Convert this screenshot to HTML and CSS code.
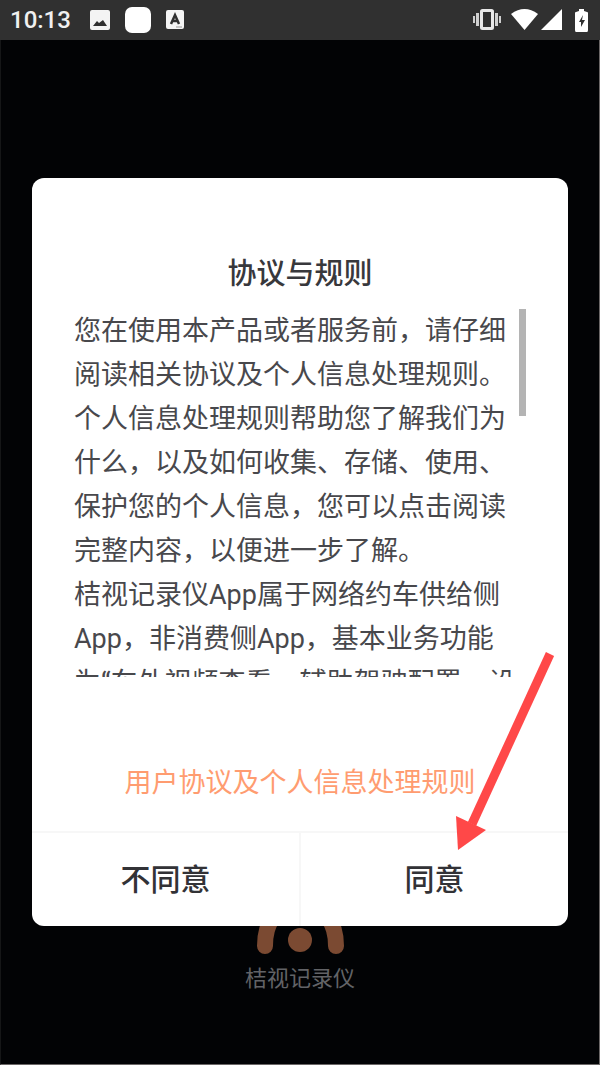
FILE: index.html
```
<!DOCTYPE html>
<html lang="zh-CN">
<head>
    <meta charset="UTF-8">
    <meta name="viewport" content="width=device-width, initial-scale=1.0">
    <title>桔视记录仪</title>
    <link rel="stylesheet" href="styles.css">
</head>
<body>
    <header class="status-bar">
        <div class="status-left">
            <span class="clock">10:13</span>
            <svg width="20" height="20" viewBox="0 0 20 20">
                <rect width="20" height="20" rx="2" fill="#f4f4f4"/>
                <path d="M3 16L7 11L9 13L13 10L17 16Z" fill="#303030"/>
            </svg>
            <svg width="26" height="26" viewBox="0 0 26 26">
                <rect width="26" height="26" rx="7" fill="#fff"/>
            </svg>
            <svg width="18" height="20" viewBox="0 0 18 20">
                <rect width="18" height="19" rx="2" fill="#f4f4f4"/>
                <path d="M5 14L9 5L13 14M6 11H12" fill="none" stroke="#303030" stroke-width="2.500"/>
                <path d="M10 17H16" stroke="#999" stroke-width="1"/>
            </svg>
        </div>
        <div class="status-right">
            <svg width="28" height="22" viewBox="0 0 28 22">
                <rect x="8.500" y="1.500" width="11" height="18" rx="1" fill="none" stroke="#e8e8e8" stroke-width="3"/>
                <path d="M4.500 4V17M23.500 4V17" stroke="#cfcfcf" stroke-width="3"/>
                <path d="M1 7V14M27 7V14" stroke="#cfcfcf" stroke-width="2"/>
            </svg>
            <svg width="27" height="22" viewBox="0 0 27 22">
                <path d="M0 5Q13.500 -5 27 5L13.500 21Z" fill="#fff"/>
            </svg>
            <svg width="21" height="22" viewBox="0 0 21 22">
                <path d="M21 0V21H0Z" fill="#fff"/>
            </svg>
            <svg width="13" height="23" viewBox="0 0 13 23">
                <path d="M0 4Q0 3 1 3L4 2V0H9V2L12 3Q13 3 13 4V21Q13 23 12 23H1Q0 23 0 21Z" fill="#fff"/>
                <path d="M8 6L4 13H6V18L10 11H7Z" fill="#303030"/>
            </svg>
        </div>
    </header>

    <main class="screen">
        <div class="splash">
            <svg width="96" height="96" viewBox="0 0 96 96">
                <path d="M13 80C13 56 24 40 48 40S84 56 84 80" fill="none" stroke="#7b4a32" stroke-width="16" stroke-linecap="round"/>
                <circle cx="48" cy="74" r="12" fill="#7b4a32"/>
            </svg>
            <span class="app-name">桔视记录仪</span>
        </div>

        <div class="overlay">
            <section class="dialog" role="dialog" aria-labelledby="dialog-title">
                <h1 id="dialog-title">协议与规则</h1>
                <div class="terms">
                    <p>您在使用本产品或者服务前，请仔细阅读相关协议及个人信息处理规则。个人信息处理规则帮助您了解我们为什么，以及如何收集、存储、使用、保护您的个人信息，您可以点击阅读完整内容，以便进一步了解。</p>
                    <p>桔视记录仪App属于网络约车供给侧App，非消费侧App，基本业务功能<br>为“车外视频查看、辅助驾驶配置、设</p>
                    <span class="scroll-thumb"></span>
                </div>
                <a class="terms-link" href="#">用户协议及个人信息处理规则</a>
                <div class="actions">
                    <button type="button">不同意</button>
                    <button type="button">同意</button>
                </div>
                <svg class="arrow" width="106" height="202" viewBox="0 0 106 202">
                    <path d="M100 3L22 173" stroke="#ff4848" stroke-width="9"/>
                    <path d="M6 165L36 179L8 199Z" fill="#ff4848"/>
                </svg>
            </section>
        </div>
    </main>
</body>
</html>
```

FILE: styles.css
```
* {
    box-sizing: border-box;
}
body {
    margin: 0;
    min-height: 100vh;
    display: flex;
    flex-direction: column;
    background: #020305;
    color: #48484c;
    font-family: Roboto, "Noto Sans CJK SC", sans-serif;
}
svg {
    display: block;
}
.status-bar {
    height: 40px;
    padding: 0 12px 0 10px;
    display: flex;
    align-items: center;
    justify-content: space-between;
    background: #303030;
}
.status-left,
.status-right {
    display: flex;
    align-items: center;
}
.status-left {
    gap: 15px;
}
.status-right {
    gap: 10px;
}
.status-right svg:nth-child(3) {
    margin: 0 3px 0 -7px;
}
.clock {
    width: 65px;
    color: #f0f0f0;
    font-size: 24px;
    font-weight: 500;
}
.screen {
    flex: 1;
    position: relative;
    display: flex;
    border: 1px solid #6b6767;
    border-top: none;
    border-left-color: #151617;
}
.splash {
    flex: 1;
    display: flex;
    flex-direction: column;
    align-items: center;
    justify-content: flex-end;
    padding-bottom: 68px;
}
.app-name {
    color: #626367;
    font-size: 22px;
    line-height: 34px;
}
.overlay {
    position: absolute;
    inset: 0;
    display: flex;
    align-items: center;
    padding: 0 31px;
}
.dialog {
    position: relative;
    flex: 1;
    display: flex;
    flex-direction: column;
    background: #fff;
    border-radius: 12px;
    overflow: hidden;
}
h1 {
    margin: 74px 0 13px;
    color: #38383c;
    font-size: 29px;
    font-weight: 500;
    line-height: 44px;
    text-align: center;
}
.terms {
    position: relative;
    height: 368px;
    margin: 0 42px;
    padding-right: 8px;
    overflow: hidden;
    font-size: 27px;
    line-height: 44px;
}
.terms p {
    margin: 0;
}
.scroll-thumb {
    position: absolute;
    top: 0;
    right: 0;
    width: 7px;
    height: 107px;
    background: #b4b4b4;
}
.terms-link {
    align-self: center;
    margin: 84px 0 26px;
    color: #ff9c70;
    font-size: 27px;
    line-height: 44px;
    text-decoration: none;
}
.actions {
    display: flex;
    border-top: 2px solid #f7f7f7;
}
.actions button {
    flex: 1;
    height: 93px;
    padding: 0 0 6px;
    border: none;
    background: none;
    color: #323236;
    font-family: inherit;
    font-size: 30px;
    font-weight: 500;
    cursor: pointer;
}
.actions button + button {
    border-left: 2px solid #f7f7f7;
}
.arrow {
    position: absolute;
    right: 12px;
    bottom: 73px;
}
```
